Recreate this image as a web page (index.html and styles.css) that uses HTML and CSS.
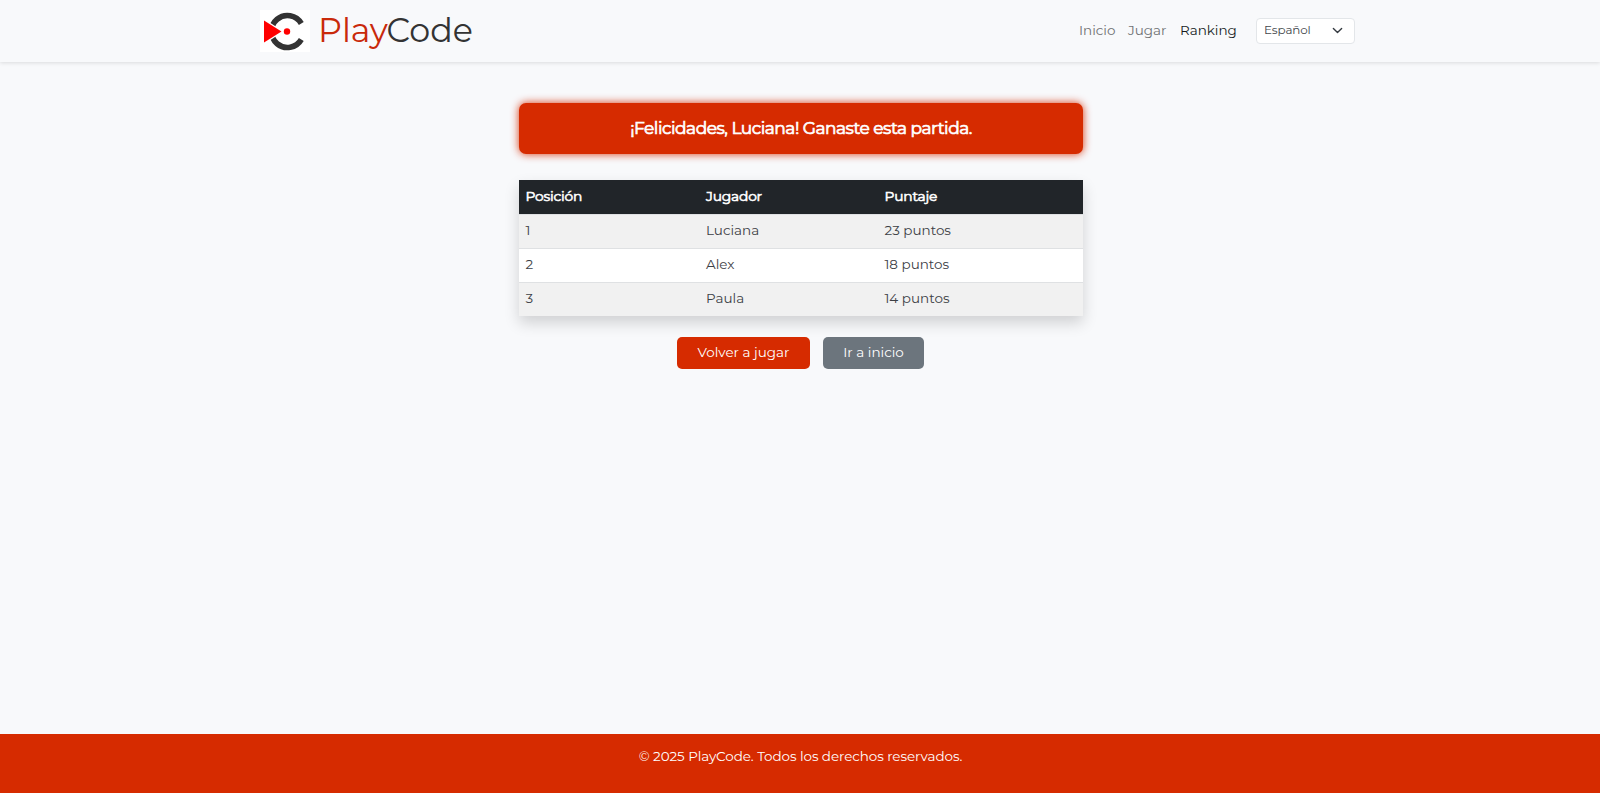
FILE: index.html
```html
<!DOCTYPE html>
<html lang="es">
<head>
<meta charset="utf-8">
<title>PlayCode</title>
<link rel="stylesheet" href="styles.css">
</head>
<body>
<header class="navbar">
  <div class="nav-inner">
    <a class="brand">
      <svg class="logo" viewBox="0 0 50 42" width="50" height="42">
        <rect width="50" height="42" fill="#fff"/>
        <path d="M41.300 13.500A16 16 0 1 0 41.300 29.500" fill="none" stroke="#333" stroke-width="5.600"/>
        <path d="M2 7.500L23.500 21.500L2 35.500Z" fill="#fff"/>
        <path d="M4 10.500L21.500 21.500L4 32.500Z" fill="#f00"/>
        <circle cx="27" cy="21.500" r="3.200" fill="#f00"/>
      </svg>
      <span class="brand-name"><span class="play">Play</span><span class="code">Code</span></span>
    </a>
    <nav class="links">
      <a class="link inicio">Inicio</a>
      <a class="link jugar">Jugar</a>
      <a class="link active">Ranking</a>
      <div class="select"><span>Español</span>
        <svg width="11" height="11" viewBox="0 0 16 16"><path d="m2 5 6 6 6-6" fill="none" stroke="#343a40" stroke-linecap="round" stroke-linejoin="round" stroke-width="2"/></svg>
      </div>
    </nav>
  </div>
</header>
<main class="content">
  <div class="alert"><span>¡Felicidades, Luciana! Ganaste esta partida.</span></div>
  <table class="ranking">
    <thead><tr><th class="c1">Posición</th><th class="c2">Jugador</th><th>Puntaje</th></tr></thead>
    <tbody>
      <tr><td>1</td><td>Luciana</td><td>23 puntos</td></tr>
      <tr><td>2</td><td>Alex</td><td>18 puntos</td></tr>
      <tr><td>3</td><td>Paula</td><td>14 puntos</td></tr>
    </tbody>
  </table>
  <div class="actions">
    <a class="btn primary">Volver a jugar</a>
    <a class="btn secondary">Ir a inicio</a>
  </div>
</main>
<footer class="footer"><span>© 2025 PlayCode. Todos los derechos reservados.</span></footer>
</body>
</html>
```
FILE: styles.css
```css
* { box-sizing: border-box; }
body {
  margin: 0;
  min-height: 793px;
  display: flex;
  flex-direction: column;
  background: #f8f9fb;
  color: #212529;
  font: 13.5px/20px Montserrat, Inter, sans-serif;
  white-space: nowrap;
}
.navbar { height: 62px; box-shadow: 0 1px 4px rgba(0, 0, 0, .12); }
.nav-inner { width: 1095px; height: 62px; margin-left: 260px; display: flex; align-items: center; justify-content: space-between; }
.brand { display: flex; align-items: center; height: 62px; }
.logo { display: block; }
.brand-name { display: flex; margin-left: 8px; padding-bottom: 2px; font-size: 33.3px; line-height: 40px; font-weight: 400; color: #333; }
.play { width: 68.5px; color: #c9290a; }
.links { display: flex; align-items: center; height: 60px; }
.link { color: #6f7173; font-size: 13.5px; padding-bottom: 2px; }
.inicio { width: 49px; }
.jugar { width: 52px; }
.active { width: 76px; color: #16191c; }
.select {
  width: 99px; height: 26px; padding: 0 11px 2px 7px;
  display: flex; align-items: center; justify-content: space-between;
  background: #fff; border: 1px solid #e3e6e9; border-radius: 4px;
  font-size: 11.9px; letter-spacing: -.1px; color: #42464a;
}
.content { width: 564px; margin-left: 519px; padding-top: 40.500px; flex: 1; }
.alert {
  height: 51px; display: flex; align-items: center; justify-content: center;
  border-radius: 7px; background: #d62b00; color: #fff;
  box-shadow: 0 0 9px rgba(214, 43, 0, .95);
  font-size: 17px; letter-spacing: -.48px; -webkit-text-stroke: .7px #fff;
}
.ranking {
  width: 564px; margin-top: 26.500px; table-layout: fixed; border-collapse: separate; border-spacing: 0;
  box-shadow: 0 7px 14px rgba(0, 0, 0, .16);
}
.c1 { width: 180.500px; }
.c2 { width: 178.500px; }
th, td { height: 34px; padding: 0 6.500px; text-align: left; }
th { padding-bottom: 3px; background: #212529; color: #fff; font-weight: 400; font-size: 13.8px; letter-spacing: -.2px; -webkit-text-stroke: .6px #fff; }
td { background: #fff; border-top: 1px solid #dfe1e3; color: #3c4045; padding-bottom: 3px; }
tbody tr:nth-child(odd) td { background: #f1f1f1; }
.actions { display: flex; justify-content: center; gap: 13px; margin: 21px 1px 0 0; }
.btn { height: 31.500px; padding-bottom: 2px; display: flex; align-items: center; justify-content: center; border-radius: 5px; color: #fff; }
.primary { width: 133px; background: #d62b00; }
.secondary { width: 101px; background: #6c757d; }
.footer { height: 59px; padding: 12px 0 0 1px; text-align: center; background: #d62b00; color: #fff; letter-spacing: -.07px; }
```
